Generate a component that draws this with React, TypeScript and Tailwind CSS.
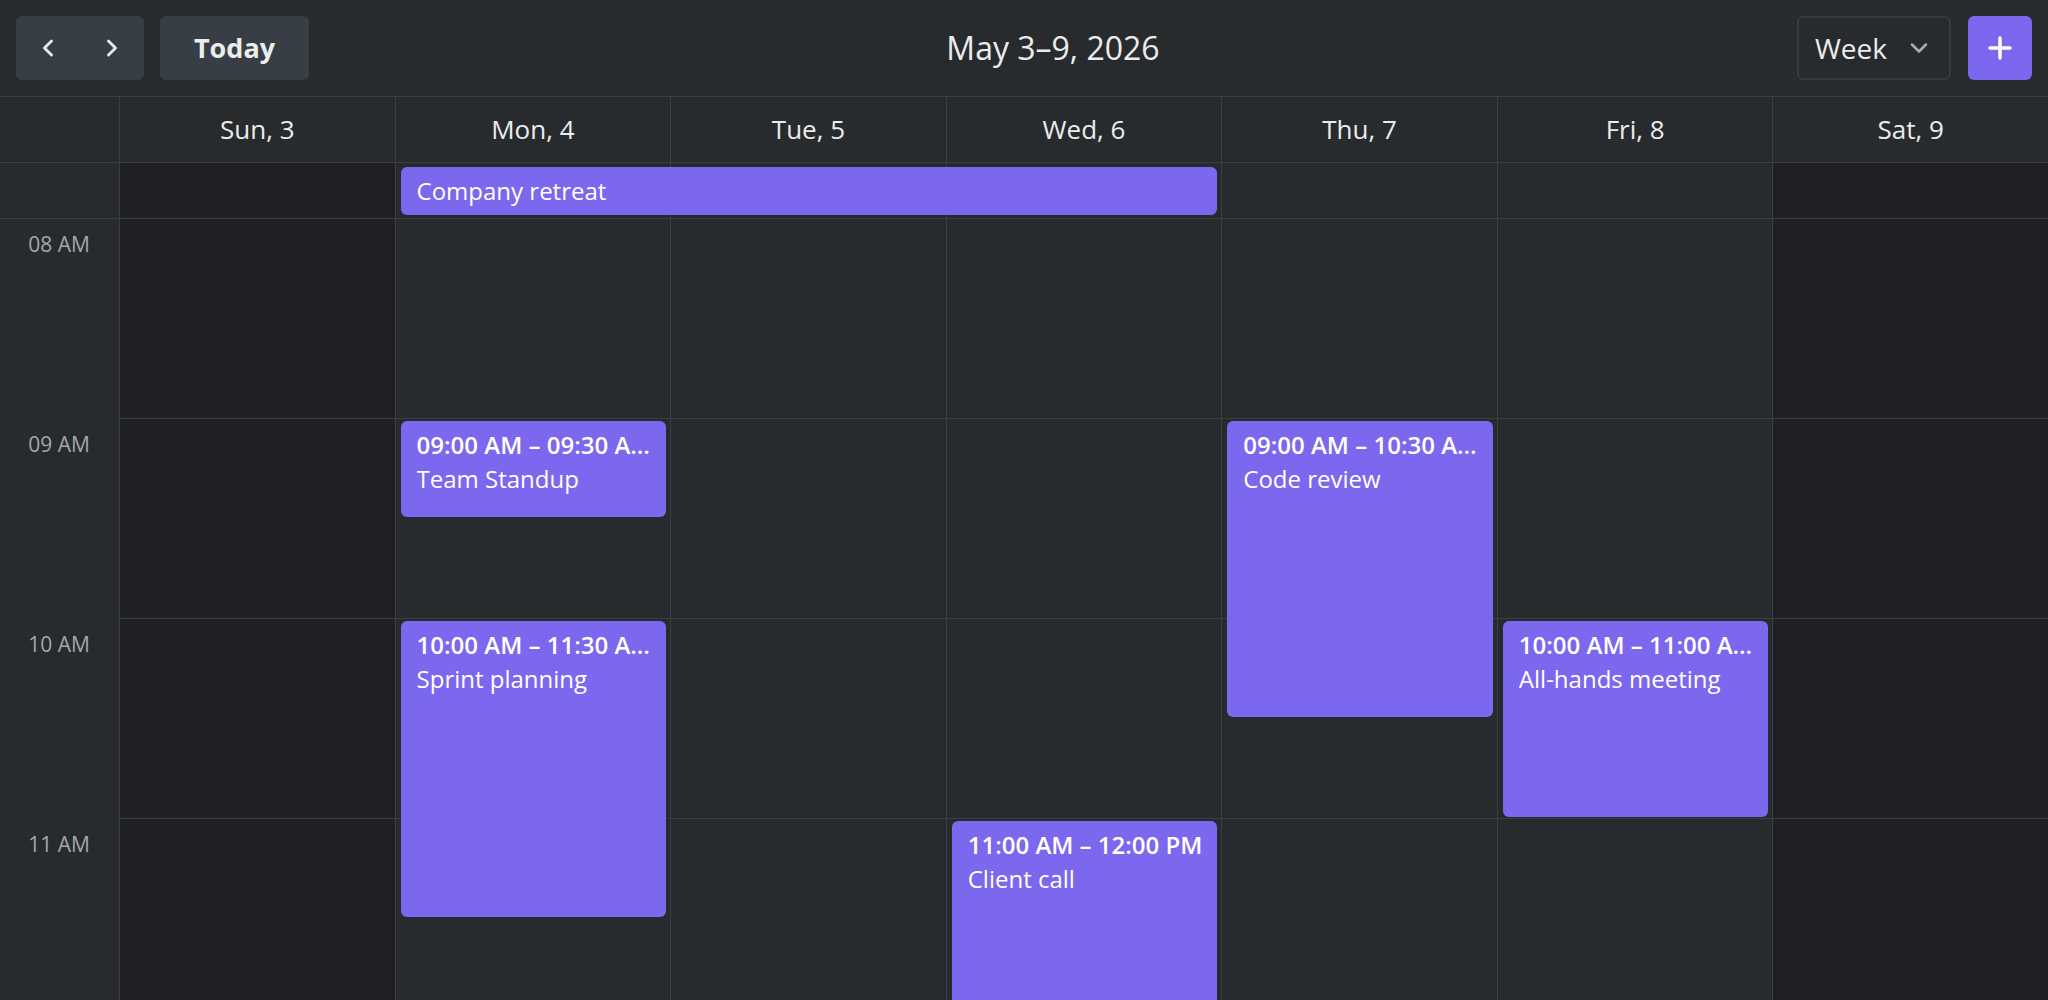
import { ChevronDown, ChevronLeft, ChevronRight, Plus } from "lucide-react";

type CalEvent = {
  day: number;
  start: number;
  end: number;
  time: string;
  title: string;
};

const START_HOUR = 8;
const HOUR_PX = 200;

const days = ["Sun, 3", "Mon, 4", "Tue, 5", "Wed, 6", "Thu, 7", "Fri, 8", "Sat, 9"];
const hours = ["08 AM", "09 AM", "10 AM", "11 AM"];

const events: CalEvent[] = [
  { day: 1, start: 9, end: 9.5, time: "09:00 AM – 09:30 AM", title: "Team Standup" },
  { day: 1, start: 10, end: 11.5, time: "10:00 AM – 11:30 AM", title: "Sprint planning" },
  { day: 3, start: 11, end: 12, time: "11:00 AM – 12:00 PM", title: "Client call" },
  { day: 4, start: 9, end: 10.5, time: "09:00 AM – 10:30 AM", title: "Code review" },
  { day: 5, start: 10, end: 11, time: "10:00 AM – 11:00 AM", title: "All-hands meeting" },
];

const isWeekend = (i: number) => i === 0 || i === 6;

export default function App() {
  return (
    <div
      className="h-screen overflow-hidden bg-[#282b2d] text-[#ececec]"
      style={{ fontFamily: "'Open Sans', 'Noto Sans', sans-serif" }}
    >
      {/* toolbar */}
      <div className="flex h-[97px] items-center justify-between border-b border-[#3a3f45] px-4">
        <div className="flex items-center gap-4">
          <div className="flex h-16 w-32 rounded-md bg-[#383e45]">
            <button className="flex flex-1 items-center justify-center text-[#e6e6e6]">
              <ChevronLeft size={28} strokeWidth={2.5} />
            </button>
            <button className="flex flex-1 items-center justify-center text-[#e6e6e6]">
              <ChevronRight size={28} strokeWidth={2.5} />
            </button>
          </div>
          <button className="h-16 w-[149px] rounded-md bg-[#383e45] text-[27px] font-bold text-[#ececec]">
            Today
          </button>
        </div>

        <h1 className="text-[32px] font-normal text-[#ececec]">May 3–9, 2026</h1>

        <div className="flex items-center gap-[17px]">
          <button className="flex h-16 w-[154px] items-center justify-between rounded-md border-2 border-[#363b41] pl-4 pr-4 text-[28px] text-[#ececec]">
            Week
            <ChevronDown size={28} strokeWidth={2.2} className="text-[#a9adb2]" />
          </button>
          <button className="flex h-16 w-16 items-center justify-center rounded-md bg-[#7b68ee] text-white">
            <Plus size={34} strokeWidth={2.5} />
          </button>
        </div>
      </div>

      {/* day headers */}
      <div className="grid h-[66px] grid-cols-[119px_repeat(7,minmax(0,1fr))] border-b border-[#3a3f45]">
        <div />
        {days.map((d) => (
          <div
            key={d}
            className="flex items-center justify-center border-l border-[#3a3f45] text-[26px] font-medium text-[#ececec]"
          >
            {d}
          </div>
        ))}
      </div>

      {/* all-day row */}
      <div className="grid h-[56px] grid-cols-[119px_repeat(7,minmax(0,1fr))] border-b border-[#3a3f45]">
        <div className="col-start-1 row-start-1" />
        {days.map((d, i) => (
          <div
            key={d}
            className={`row-start-1 border-l border-[#3a3f45] ${isWeekend(i) ? "bg-[#201f24]" : ""}`}
            style={{ gridColumnStart: i + 2 }}
          />
        ))}
        <div className="col-start-3 col-end-6 row-start-1 mt-[4px] mb-[3px] ml-[6px] mr-[4px] flex items-center rounded-md bg-[#7b68ee] px-4 text-[24px] text-white">
          Company retreat
        </div>
      </div>

      {/* time grid */}
      <div className="grid grid-cols-[119px_repeat(7,minmax(0,1fr))]">
        <div className="flex flex-col">
          {hours.map((h) => (
            <div key={h} className="h-[200px] pr-[29px] pt-[10px] text-right text-[21px] text-[#a3a7ac]">
              {h}
            </div>
          ))}
        </div>
        {days.map((d, i) => (
          <div
            key={d}
            className={`relative flex flex-col border-l border-[#3a3f45] ${isWeekend(i) ? "bg-[#201f24]" : ""}`}
          >
            {hours.map((h) => (
              <div key={h} className="h-[200px] shrink-0 border-b border-[#3a3f45]" />
            ))}
            {events
              .filter((e) => e.day === i)
              .map((e) => (
                <div
                  key={e.title}
                  className="absolute left-[5px] right-[4px] overflow-hidden rounded-md bg-[#7b68ee] pl-4 pr-[14px] pt-[7px] text-white"
                  style={{
                    top: (e.start - START_HOUR) * HOUR_PX + 2,
                    height: (e.end - e.start) * HOUR_PX - 4,
                  }}
                >
                  <div className="truncate text-[24px] font-semibold leading-[34px]">{e.time}</div>
                  <div className="truncate text-[24px] leading-[34px]">{e.title}</div>
                </div>
              ))}
          </div>
        ))}
      </div>
    </div>
  );
}
